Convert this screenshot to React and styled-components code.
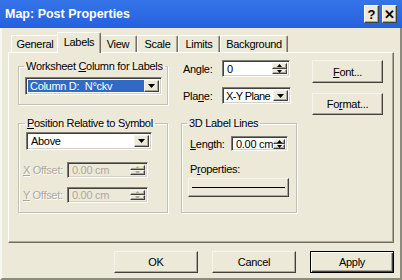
import React from 'react';
import styled, { createGlobalStyle, css } from 'styled-components';

const Global = createGlobalStyle`
  html, body { margin: 0; padding: 0; background: #ECE9D8; }
  body {
    font-family: "Liberation Sans", Arial, sans-serif;
    font-size: 11px;
    letter-spacing: -0.3px;
    color: #000;
  }
  * { box-sizing: border-box; }
`;

const Window = styled.div`
  width: 402px;
  height: 280px;
  display: flex;
  flex-direction: column;
  background: #ECE9D8;
  overflow: hidden;
`;

const TitleBar = styled.div`
  height: 28px;
  flex: none;
  display: flex;
  align-items: center;
  padding: 0 5px;
  background: linear-gradient(#3674e8, #2461de);
`;

const Title = styled.div`
  flex: 1;
  color: #fff;
  font-weight: bold;
  font-size: 12.5px;
  letter-spacing: 0;
`;

const CapButton = styled.div`
  width: 15px;
  height: 18px;
  margin-left: 3px;
  background: #ECE9D8;
  border: 1px solid;
  border-color: #fff #404040 #404040 #fff;
  box-shadow: inset -1px -1px 0 #ACA899;
  display: flex;
  align-items: center;
  justify-content: center;
  font-weight: bold;
  font-size: 13px;
  letter-spacing: 0;
  color: #000;
`;

const Body = styled.div`
  flex: 1;
  display: flex;
  flex-direction: column;
  padding-top: 4px;
  border-left: 2px solid #f7f6f1;
  border-right: 2px solid #8d8a7e;
  border-bottom: 2px solid #8d8a7e;
`;

const TabsRow = styled.div`
  display: flex;
  align-items: flex-end;
  height: 20px;
  padding-left: 9px;
`;

const Tab = styled.div`
  width: ${p => p.$w}px;
  height: 17px;
  display: flex;
  align-items: center;
  justify-content: center;
  background: #ECE9D8;
  border-top: 1px solid #fff;
  border-left: 1px solid #fff;
  border-right: 1px solid #716F64;
  border-radius: 2px 2px 0 0;
  box-shadow: inset -1px 0 0 #ACA899;
  ${p => p.$active && css`
    position: relative;
    z-index: 1;
    width: ${p.$w + 4}px;
    height: 21px;
    margin: 0 -2px -1px;
    padding-bottom: 2px;
  `}
`;

const Panel = styled.div`
  margin-left: 6px;
  width: 386px;
  height: 191px;
  display: flex;
  padding: 7px 0 0 9px;
  border-top: 1px solid #fff;
  border-left: 1px solid #fff;
  border-right: 1px solid #716F64;
  border-bottom: 1px solid #716F64;
  box-shadow: inset -1px -1px 0 #ACA899;
`;

const Column = styled.div`
  display: flex;
  flex-direction: column;
  align-items: flex-start;
  width: ${p => p.$w}px;
  margin-left: ${p => p.$ml || 0}px;
`;

const Group = styled.fieldset`
  width: 100%;
  min-width: 0;
  margin: ${p => p.$mt || 0}px 0 0;
  padding: 0 0 ${p => p.$pb}px;
  border: 1px solid #C4C1B3;
  box-shadow: 1px 1px 0 #fff, inset 1px 1px 0 #fff;
`;

const Legend = styled.legend`
  margin-left: ${p => p.$ml}px;
  padding: 0 2px;
  height: 13px;
  line-height: 13px;
`;

const GroupBody = styled.div`
  display: flex;
  flex-direction: column;
  align-items: flex-start;
`;

const sunken = css`
  background: #fff;
  border: 1px solid;
  border-color: #7F7D73 #fff #fff #7F7D73;
  box-shadow: inset 1px 1px 0 #404040, inset -1px -1px 0 #D4D0C8;
`;

const raised = css`
  background: #ECE9D8;
  border: 1px solid;
  border-color: #F4F3EE #404040 #404040 #F4F3EE;
  box-shadow: inset -1px -1px 0 #ACA899;
`;

const Combo = styled.div`
  ${sunken};
  width: ${p => p.$w}px;
  height: ${p => p.$h || 18}px;
  margin: ${p => p.$mt || 0}px 0 0 ${p => p.$ml || 0}px;
  display: flex;
  align-items: stretch;
  padding: 1px;
  flex: none;
`;

const ComboValue = styled.div`
  flex: 1;
  min-width: 0;
  display: flex;
  align-items: center;
  padding-left: ${p => (p.$tight ? 1 : 2)}px;
  white-space: pre;
  margin: 1px 0 1px 1px;
  ${p => p.$tight && css`letter-spacing: -0.6px;`}
  ${p => p.$selected && css`
    background: #316AC5;
    color: #fff;
  `}
`;

const DropButton = styled.div`
  ${raised};
  width: 15px;
  flex: none;
  margin: 1px 1px 1px 0;
  display: flex;
  align-items: center;
  justify-content: center;
`;

const TextBox = styled.div`
  ${sunken};
  width: ${p => p.$w}px;
  height: ${p => p.$h}px;
  display: flex;
  align-items: stretch;
  padding: 1px;
  flex: none;
  ${p => p.$disabled && css`
    background: #ECE9D8;
    color: #ACA899;
  `}
`;

const TextValue = styled.div`
  flex: 1;
  display: flex;
  align-items: center;
  padding-left: 3px;
  white-space: pre;
`;

const Spinner = styled.div`
  width: ${p => p.$w || 15}px;
  flex: none;
  display: flex;
  flex-direction: column;
  margin: 1px 1px 1px 0;
`;

const SpinHalf = styled.div`
  ${raised};
  flex: 1;
  display: flex;
  align-items: center;
  justify-content: center;
`;

const FieldRow = styled.div`
  display: flex;
  align-items: center;
  margin-top: ${p => p.$mt || 0}px;
  padding-left: ${p => p.$pl || 0}px;
`;

const FieldLabel = styled.div`
  width: ${p => p.$w}px;
  white-space: nowrap;
  ${p => p.$disabled && css`
    color: #ACA899;
    text-shadow: 1px 1px 0 #fff;
  `}
`;

const PlainLabel = styled.div`
  margin: ${p => p.$mt || 0}px 0 0 ${p => p.$ml || 0}px;
  line-height: 13px;
`;

const PushButton = styled.div`
  ${raised};
  width: ${p => p.$w}px;
  height: ${p => p.$h}px;
  margin: ${p => p.$mt || 0}px 0 0 ${p => p.$ml || 0}px;
  display: flex;
  align-items: center;
  justify-content: center;
  flex: none;
  ${p => p.$default && css`
    border: 1px solid #000;
    box-shadow: inset 1px 1px 0 #fff, inset -1px -1px 0 #404040, inset -2px -2px 0 #ACA899;
  `}
`;

const LineSample = styled.div`
  width: 93px;
  height: 1px;
  background: #000;
`;

const ButtonsRow = styled.div`
  display: flex;
  justify-content: flex-end;
  gap: 14px;
  margin-top: 8px;
  padding-right: 6px;
`;

const Arrow = ({ up, disabled, small }) => (
  <svg width={small ? 5 : 7} height={small ? 3 : 4} viewBox={small ? '0 0 5 3' : '0 0 7 4'} style={{ display: 'block' }}>
    <polygon
      points={small ? (up ? '0,3 5,3 2.5,0' : '0,0 5,0 2.5,3') : (up ? '0,4 7,4 3.5,0' : '0,0 7,0 3.5,4')}
      fill={disabled ? '#ACA899' : '#000'}
    />
  </svg>
);

const SpinBox = ({ w, h, value, disabled, spinW }) => (
  <TextBox $w={w} $h={h} $disabled={disabled}>
    <TextValue>{value}</TextValue>
    <Spinner $w={spinW}>
      <SpinHalf><Arrow up small disabled={disabled} /></SpinHalf>
      <SpinHalf><Arrow small disabled={disabled} /></SpinHalf>
    </Spinner>
  </TextBox>
);

const tabs = [
  { label: 'General', w: 48 },
  { label: 'Labels', w: 40, active: true },
  { label: 'View', w: 38 },
  { label: 'Scale', w: 41 },
  { label: 'Limits', w: 42 },
  { label: 'Background', w: 68 },
];

export default function App() {
  return (
    <>
      <Global />
      <Window>
        <TitleBar>
          <Title>Map: Post Properties</Title>
          <CapButton>?</CapButton>
          <CapButton>✕</CapButton>
        </TitleBar>
        <Body>
          <TabsRow>
            {tabs.map(t => (
              <Tab key={t.label} $w={t.w} $active={t.active}>{t.label}</Tab>
            ))}
          </TabsRow>
          <Panel>
            <Column $w={150}>
              <Group $pb={9}>
                <Legend $ml={5}>Worksheet <u>C</u>olumn for Labels</Legend>
                <GroupBody>
                  <Combo $w={137} $mt={4} $ml={6}>
                    <ComboValue $selected>Column D:  N°ckv</ComboValue>
                    <DropButton><Arrow /></DropButton>
                  </Combo>
                </GroupBody>
              </Group>
              <Group $mt={12} $pb={9}>
                <Legend $ml={6}><u>P</u>osition Relative to Symbol</Legend>
                <GroupBody>
                  <Combo $w={126} $mt={2} $ml={7}>
                    <ComboValue>Above</ComboValue>
                    <DropButton><Arrow /></DropButton>
                  </Combo>
                  <FieldRow $mt={12} $pl={4}>
                    <FieldLabel $w={44} $disabled><u>X</u> Offset:</FieldLabel>
                    <SpinBox w={81} h={16} value="0.00 cm" disabled />
                  </FieldRow>
                  <FieldRow $mt={9} $pl={4}>
                    <FieldLabel $w={44} $disabled><u>Y</u> Offset:</FieldLabel>
                    <SpinBox w={81} h={16} value="0.00 cm" disabled />
                  </FieldRow>
                </GroupBody>
              </Group>
            </Column>
            <Column $w={116} $ml={13}>
              <FieldRow $pl={2}>
                <FieldLabel $w={39}>Angle:</FieldLabel>
                <SpinBox w={68} h={17} value="0" />
              </FieldRow>
              <FieldRow $mt={10} $pl={2}>
                <FieldLabel $w={39}>Pla<u>n</u>e:</FieldLabel>
                <Combo $w={69} $h={17}>
                  <ComboValue $tight>X-Y Plane</ComboValue>
                  <DropButton><Arrow /></DropButton>
                </Combo>
              </FieldRow>
              <Group $mt={13} $pb={15}>
                <Legend $ml={5}>3D Label Lines</Legend>
                <GroupBody>
                  <FieldRow $mt={6} $pl={8}>
                    <FieldLabel $w={41}><u>L</u>ength:</FieldLabel>
                    <SpinBox w={57} h={15} value="0.00 cm" spinW={12} />
                  </FieldRow>
                  <PlainLabel $mt={12} $ml={8}>P<u>r</u>operties:</PlainLabel>
                  <PushButton $w={101} $h={19} $mt={2} $ml={6}>
                    <LineSample />
                  </PushButton>
                </GroupBody>
              </Group>
            </Column>
            <Column $w={71} $ml={15}>
              <PushButton $w={71} $h={23}><span><u>F</u>ont...</span></PushButton>
              <PushButton $w={71} $h={22} $mt={10}><span>Fo<u>r</u>mat...</span></PushButton>
            </Column>
          </Panel>
          <ButtonsRow>
            <PushButton $w={84} $h={22}>OK</PushButton>
            <PushButton $w={84} $h={22}>Cancel</PushButton>
            <PushButton $w={84} $h={22} $default>Apply</PushButton>
          </ButtonsRow>
        </Body>
      </Window>
    </>
  );
}
